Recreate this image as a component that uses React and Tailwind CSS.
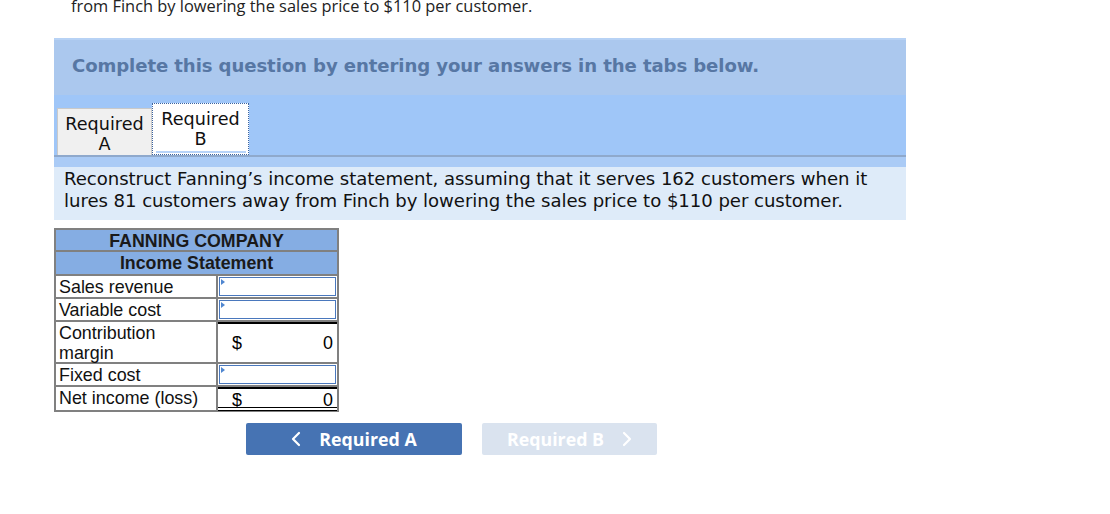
import React from 'react'

const Marker = () => (
  <span className="absolute left-[1px] top-[1px] w-0 h-0 border-t-[3px] border-b-[3px] border-l-[4px] border-t-transparent border-b-transparent border-l-[#4f86d0]" />
)

function InputCell() {
  return (
    <div className="h-full p-[1px] bg-white">
      <div className="relative h-full border border-[#4a78bd] bg-white">
        <Marker />
      </div>
    </div>
  )
}

function Row({ label, children, tall, last }) {
  return (
    <div className={`flex ${tall ? 'h-[42px]' : 'h-[23px]'} ${last ? '' : 'border-b-2 border-[#808080]'}`}>
      <div className="w-[162px] border-r-2 border-[#808080] pl-[3px] pt-[1px] leading-[21px] text-[17.9px] text-[#111]">
        {label}
      </div>
      <div className="flex-1 relative">{children}</div>
    </div>
  )
}

export default function App() {
  return (
    <div className="w-[1110px] h-[514px] bg-white overflow-hidden">
      {/* cut-off line from the question above */}
      <div className="-mt-[4px] pl-[71px] text-[16.4px] leading-[20px] text-[#222] font-['Open_Sans',sans-serif]">
        from Finch by lowering the sales price to $110 per customer.
      </div>

      <div className="ml-[54px] mt-[22px] w-[852px]">
        {/* instructions */}
        <div className="h-[57px] bg-[#abc8ee] border-t-2 border-[#b7d2f5] pl-[18px] pb-[3px] flex items-center">
          <span className="text-[18.1px] font-bold text-[#5777a4] font-['DejaVu_Sans',Verdana,sans-serif] tracking-[-0.1px]">
            Complete this question by entering your answers in the tabs below.
          </span>
        </div>

        {/* tabs */}
        <div className="h-[62px] bg-[#9fc6f8] border-b-2 border-[#8fa9cc] flex items-end pl-[3px] font-['DejaVu_Sans',Verdana,sans-serif] text-[17.6px] text-[#111]">
          <div className="w-[95px] h-[47px] bg-[#f0f0f0] border border-[#c9c9c9] border-b-0 flex flex-col items-center leading-[20px] pt-[5px]">
            <span>Required</span>
            <span>A</span>
          </div>
          <div className="w-[97px] h-[52px] bg-white border border-dotted border-[#3b63a0] flex flex-col items-center leading-[20px] pt-[5px]">
            <span>Required</span>
            <span>B</span>
            <div className="mt-auto mb-[1px] w-[90px] h-[2px] bg-[#b7d3f8]" />
          </div>
        </div>
        <div className="h-[10px] bg-[#aacbf6]" />

        {/* question text */}
        <div className="bg-[#deebf9] h-[53px] px-[10px] pt-[1px] font-['DejaVu_Sans',Verdana,sans-serif] text-[18.1px] leading-[22px] text-[#111] tracking-[-0.05px]">
          Reconstruct Fanning’s income statement, assuming that it serves 162 customers when it
          <br />
          lures 81 customers away from Finch by lowering the sales price to $110 per customer.
        </div>
      </div>

      {/* income statement */}
      <div className="ml-[54px] mt-[8px] w-[285px] border-2 border-[#808080] font-['Liberation_Sans',Arial,sans-serif]">
        <div className="h-[22px] bg-[#85ade3] border-b-2 border-[#808080] text-center font-bold text-[17.8px] leading-[22px] text-[#1a1a1a]">
          FANNING COMPANY
        </div>
        <div className="h-[24px] bg-[#85ade3] border-b-2 border-[#808080] text-center font-bold text-[17.8px] leading-[23px] text-[#1a1a1a]">
          Income Statement
        </div>
        <Row label="Sales revenue">
          <InputCell />
        </Row>
        <Row label="Variable cost">
          <InputCell />
        </Row>
        <Row label={<span className="block leading-[20px]">Contribution<br />margin</span>} tall>
          <div className="absolute left-0 right-0 top-0 h-[2px] bg-black" />
          <div className="h-full flex items-center justify-between pl-[14px] pr-[4px] text-[17.9px] pt-[2px]">
            <span>$</span>
            <span>0</span>
          </div>
        </Row>
        <Row label="Fixed cost">
          <InputCell />
        </Row>
        <Row label="Net income (loss)" last>
          <div className="absolute left-0 right-0 top-0 h-[2px] bg-black" />
          <div className="h-full flex items-center justify-between pl-[14px] pr-[4px] text-[17.9px] leading-[20px] pt-[2px]">
            <span>$</span>
            <span>0</span>
          </div>
          <div className="absolute left-0 right-0 bottom-[-1px] h-[4px] border-t border-b border-black" />
        </Row>
      </div>

      {/* navigation */}
      <div className="mt-[11px] flex gap-[20px] ml-[246px] font-['Open_Sans',sans-serif]">
        <button className="w-[216px] h-[32px] bg-[#4673b3] rounded-[2px] flex items-center justify-center gap-[18px] text-white font-bold text-[17.8px]">
          <svg width="10" height="16" viewBox="0 0 10 16" fill="none" stroke="white" strokeWidth="2.2" strokeLinecap="round" strokeLinejoin="round">
            <path d="M8 2 L2 8 L8 14" />
          </svg>
          <span>Required A</span>
        </button>
        <button className="w-[175px] h-[32px] bg-[#dae3ef] rounded-[2px] flex items-center justify-center gap-[18px] text-white font-bold text-[17.8px]">
          <span>Required B</span>
          <svg width="10" height="16" viewBox="0 0 10 16" fill="none" stroke="white" strokeWidth="2.2" strokeLinecap="round" strokeLinejoin="round">
            <path d="M2 2 L8 8 L2 14" />
          </svg>
        </button>
      </div>
    </div>
  )
}
